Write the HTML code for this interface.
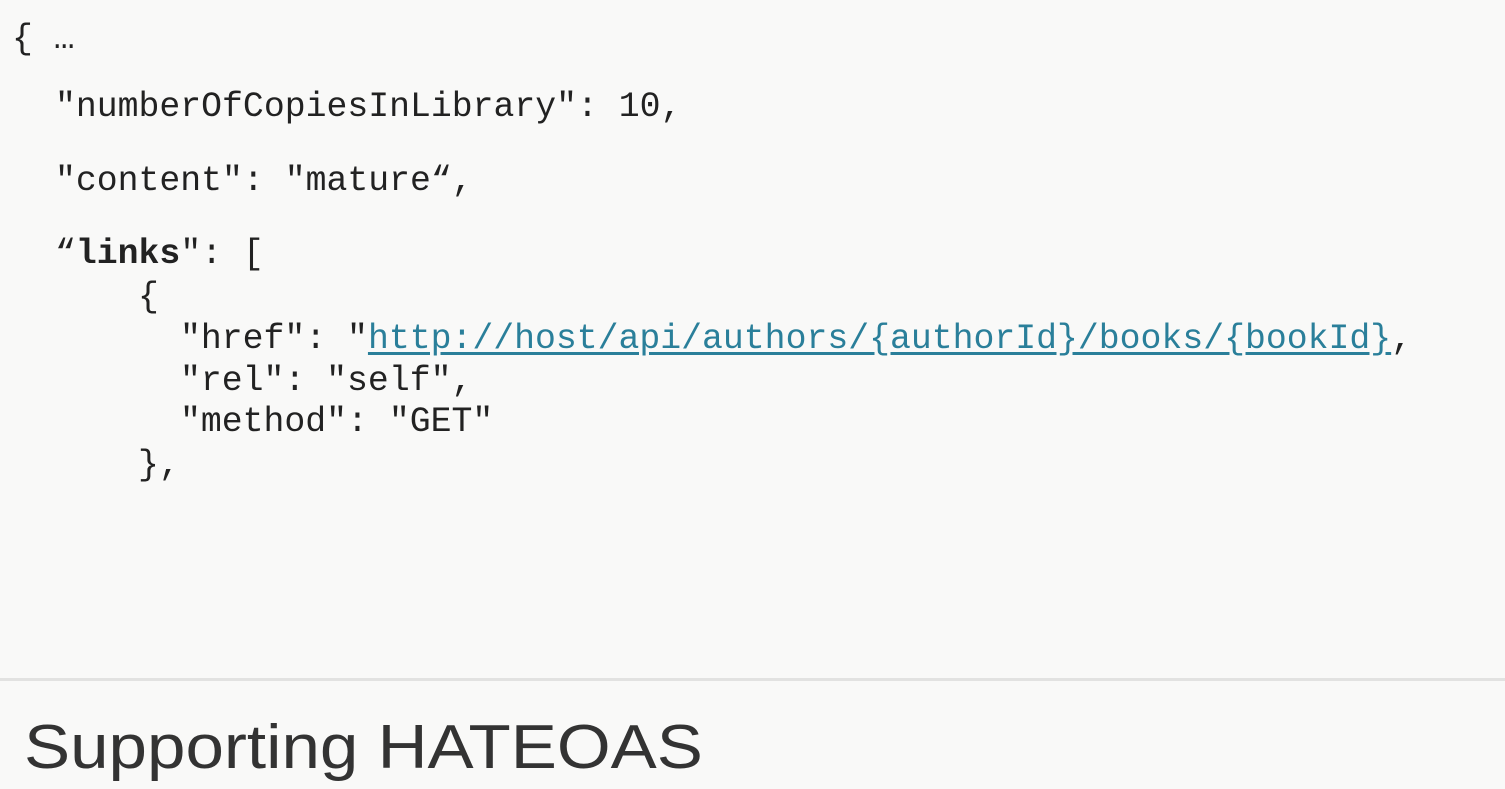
<!DOCTYPE html>
<html><head><meta charset="utf-8"><style>
body{margin:0;width:1505px;height:789px;background:#f9f9f8;overflow:hidden;position:relative;font-family:"Liberation Mono",monospace;color:#222;}
.l{position:absolute;font-size:34.8px;white-space:pre;line-height:40px;}
a{color:#2a7f9a;text-decoration:underline;text-underline-offset:4px;}
.hr{position:absolute;left:0;top:678px;width:1505px;height:3px;background:#e2e2e1;}
.t{position:absolute;left:24px;top:708px;font-family:"Liberation Sans",sans-serif;font-size:62px;color:#333;line-height:80px;white-space:pre;transform-origin:left;transform:scaleX(1.115);font-weight:normal;}
</style></head><body>
<div class="l" style="left:12px;top:20px">{ …</div>
<div class="l" style="left:55px;top:88px">"numberOfCopiesInLibrary": 10,</div>
<div class="l" style="left:55px;top:162px">"content": "mature“,</div>
<div class="l" style="left:55px;top:235px">“<b>links</b>": [</div>
<div class="l" style="left:138px;top:278px">{</div>
<div class="l" style="left:180px;top:320px">"href": "<a>http://host/api/authors/{authorId}/books/{bookId}</a>,</div>
<div class="l" style="left:180px;top:362px">"rel": "self",</div>
<div class="l" style="left:180px;top:403px">"method": "GET"</div>
<div class="l" style="left:138px;top:446px">},</div>
<div class="hr"></div>
<div class="t">Supporting HATEOAS</div>
</body></html>
